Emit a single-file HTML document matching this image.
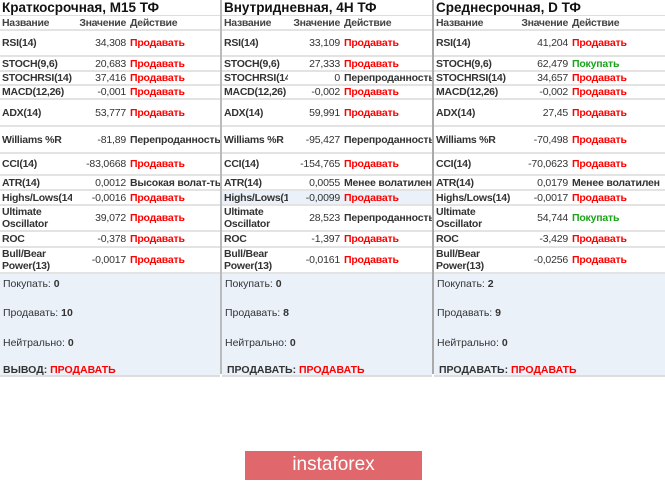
<!DOCTYPE html>
<html><head><meta charset="utf-8"><style>
*{margin:0;padding:0;box-sizing:border-box}
body{width:665px;height:481px;background:#fff;font-family:"Liberation Sans",Arial,sans-serif;font-size:10.5px;color:#333;position:relative;overflow:hidden}
.col{position:absolute;top:0;height:374px}
.title{height:16px;font-size:13.5px;font-weight:bold;color:#111;line-height:16px;padding-left:2px;white-space:nowrap;overflow:hidden;border-bottom:1px solid #ddd}
table{border-collapse:collapse;table-layout:fixed;width:100%}
td{border-bottom:2px solid #e3e3e3;padding:0 2px;vertical-align:middle;line-height:12px;white-space:nowrap;overflow:hidden;letter-spacing:-0.2px}
td.n{font-weight:bold;color:#333;white-space:normal;letter-spacing:-0.25px}
td.v{text-align:right;color:#333}
td.a{font-weight:bold;color:#333}
td.r,span.r{color:#f00}td.g{color:#1aa31a}
tr.h td{font-weight:bold;color:#444;height:14px;letter-spacing:-0.3px}
.sum{height:103px;background:#eaf1f9;border-bottom:2px solid #ddd;position:relative;font-size:10.5px}
.sum div{position:absolute;left:3px}
.sep{position:absolute;top:0;width:2px;height:374px;background:#bbb}
.hl td{background:#eaf1f9}
</style></head><body>

<div class="col" style="left:0;width:220px">
<div class="title">Краткосрочная, M15 ТФ</div>
<table><colgroup><col style="width:72px"><col style="width:56px"><col></colgroup>
<tr class="h"><td>Название</td><td style="text-align:right">Значение</td><td>Действие</td></tr>
<tr style="height:26px"><td class="n">RSI(14)</td><td class="v">34,308</td><td class="a r">Продавать</td></tr>
<tr style="height:15px"><td class="n">STOCH(9,6)</td><td class="v">20,683</td><td class="a r">Продавать</td></tr>
<tr style="height:14px"><td class="n">STOCHRSI(14)</td><td class="v">37,416</td><td class="a r">Продавать</td></tr>
<tr style="height:14px"><td class="n">MACD(12,26)</td><td class="v">-0,001</td><td class="a r">Продавать</td></tr>
<tr style="height:27px"><td class="n">ADX(14)</td><td class="v">53,777</td><td class="a r">Продавать</td></tr>
<tr style="height:27px"><td class="n" style="white-space:nowrap">Williams %R</td><td class="v">-81,89</td><td class="a">Перепроданность</td></tr>
<tr style="height:22px"><td class="n">CCI(14)</td><td class="v">-83,0668</td><td class="a r">Продавать</td></tr>
<tr style="height:15px"><td class="n">ATR(14)</td><td class="v">0,0012</td><td class="a">Высокая волат-ть</td></tr>
<tr style="height:15px"><td class="n" style="white-space:nowrap">Highs/Lows(14)</td><td class="v">-0,0016</td><td class="a r">Продавать</td></tr>
<tr style="height:25px"><td class="n">Ultimate Oscillator</td><td class="v">39,072</td><td class="a r">Продавать</td></tr>
<tr style="height:16px"><td class="n">ROC</td><td class="v">-0,378</td><td class="a r">Продавать</td></tr>
<tr style="height:24px"><td class="n">Bull/Bear Power(13)</td><td class="v">-0,0017</td><td class="a r">Продавать</td></tr>
</table>
<div class="sum"><div style="top:4px">Покупать: <b>0</b></div><div style="top:33px">Продавать: <b>10</b></div><div style="top:63px">Нейтрально: <b>0</b></div><div style="top:90px;font-weight:bold">ВЫВОД: <span class="r">ПРОДАВАТЬ</span></div></div>
</div>
<div class="sep" style="left:220px"></div>

<div class="col" style="left:222px;width:210px">
<div class="title">Внутридневная, 4H ТФ</div>
<table><colgroup><col style="width:66px"><col style="width:54px"><col></colgroup>
<tr class="h"><td>Название</td><td style="text-align:right">Значение</td><td>Действие</td></tr>
<tr style="height:26px"><td class="n">RSI(14)</td><td class="v">33,109</td><td class="a r">Продавать</td></tr>
<tr style="height:15px"><td class="n">STOCH(9,6)</td><td class="v">27,333</td><td class="a r">Продавать</td></tr>
<tr style="height:14px"><td class="n">STOCHRSI(14)</td><td class="v">0</td><td class="a">Перепроданность</td></tr>
<tr style="height:14px"><td class="n">MACD(12,26)</td><td class="v">-0,002</td><td class="a r">Продавать</td></tr>
<tr style="height:27px"><td class="n">ADX(14)</td><td class="v">59,991</td><td class="a r">Продавать</td></tr>
<tr style="height:27px"><td class="n" style="white-space:nowrap">Williams %R</td><td class="v">-95,427</td><td class="a">Перепроданность</td></tr>
<tr style="height:22px"><td class="n">CCI(14)</td><td class="v">-154,765</td><td class="a r">Продавать</td></tr>
<tr style="height:15px"><td class="n">ATR(14)</td><td class="v">0,0055</td><td class="a">Менее волатилен</td></tr>
<tr class="hl" style="height:15px"><td class="n" style="white-space:nowrap">Highs/Lows(14)</td><td class="v">-0,0099</td><td class="a r">Продавать</td></tr>
<tr style="height:25px"><td class="n">Ultimate Oscillator</td><td class="v">28,523</td><td class="a">Перепроданность</td></tr>
<tr style="height:16px"><td class="n">ROC</td><td class="v">-1,397</td><td class="a r">Продавать</td></tr>
<tr style="height:24px"><td class="n">Bull/Bear Power(13)</td><td class="v">-0,0161</td><td class="a r">Продавать</td></tr>
</table>
<div class="sum"><div style="top:4px">Покупать: <b>0</b></div><div style="top:33px">Продавать: <b>8</b></div><div style="top:63px">Нейтрально: <b>0</b></div><div style="top:90px;left:5px;font-weight:bold">ПРОДАВАТЬ: <span class="r">ПРОДАВАТЬ</span></div></div>
</div>
<div class="sep" style="left:432px;background:#aaa"></div>

<div class="col" style="left:434px;width:231px">
<div class="title">Среднесрочная, D ТФ</div>
<table><colgroup><col style="width:78px"><col style="width:58px"><col></colgroup>
<tr class="h"><td>Название</td><td style="text-align:right">Значение</td><td>Действие</td></tr>
<tr style="height:26px"><td class="n">RSI(14)</td><td class="v">41,204</td><td class="a r">Продавать</td></tr>
<tr style="height:15px"><td class="n">STOCH(9,6)</td><td class="v">62,479</td><td class="a g">Покупать</td></tr>
<tr style="height:14px"><td class="n">STOCHRSI(14)</td><td class="v">34,657</td><td class="a r">Продавать</td></tr>
<tr style="height:14px"><td class="n">MACD(12,26)</td><td class="v">-0,002</td><td class="a r">Продавать</td></tr>
<tr style="height:27px"><td class="n">ADX(14)</td><td class="v">27,45</td><td class="a r">Продавать</td></tr>
<tr style="height:27px"><td class="n">Williams %R</td><td class="v">-70,498</td><td class="a r">Продавать</td></tr>
<tr style="height:22px"><td class="n">CCI(14)</td><td class="v">-70,0623</td><td class="a r">Продавать</td></tr>
<tr style="height:15px"><td class="n">ATR(14)</td><td class="v">0,0179</td><td class="a">Менее волатилен</td></tr>
<tr style="height:15px"><td class="n" style="white-space:nowrap">Highs/Lows(14)</td><td class="v">-0,0017</td><td class="a r">Продавать</td></tr>
<tr style="height:25px"><td class="n">Ultimate Oscillator</td><td class="v">54,744</td><td class="a g">Покупать</td></tr>
<tr style="height:16px"><td class="n">ROC</td><td class="v">-3,429</td><td class="a r">Продавать</td></tr>
<tr style="height:24px"><td class="n">Bull/Bear Power(13)</td><td class="v">-0,0256</td><td class="a r">Продавать</td></tr>
</table>
<div class="sum"><div style="top:4px">Покупать: <b>2</b></div><div style="top:33px">Продавать: <b>9</b></div><div style="top:63px">Нейтрально: <b>0</b></div><div style="top:90px;left:5px;font-weight:bold">ПРОДАВАТЬ: <span class="r">ПРОДАВАТЬ</span></div></div>
</div>

<div style="position:absolute;left:245px;top:451px;width:177px;height:29px;background:#e0676b;color:#fff;font-size:19px;text-align:center;line-height:28px">instaforex</div>
</body></html>
